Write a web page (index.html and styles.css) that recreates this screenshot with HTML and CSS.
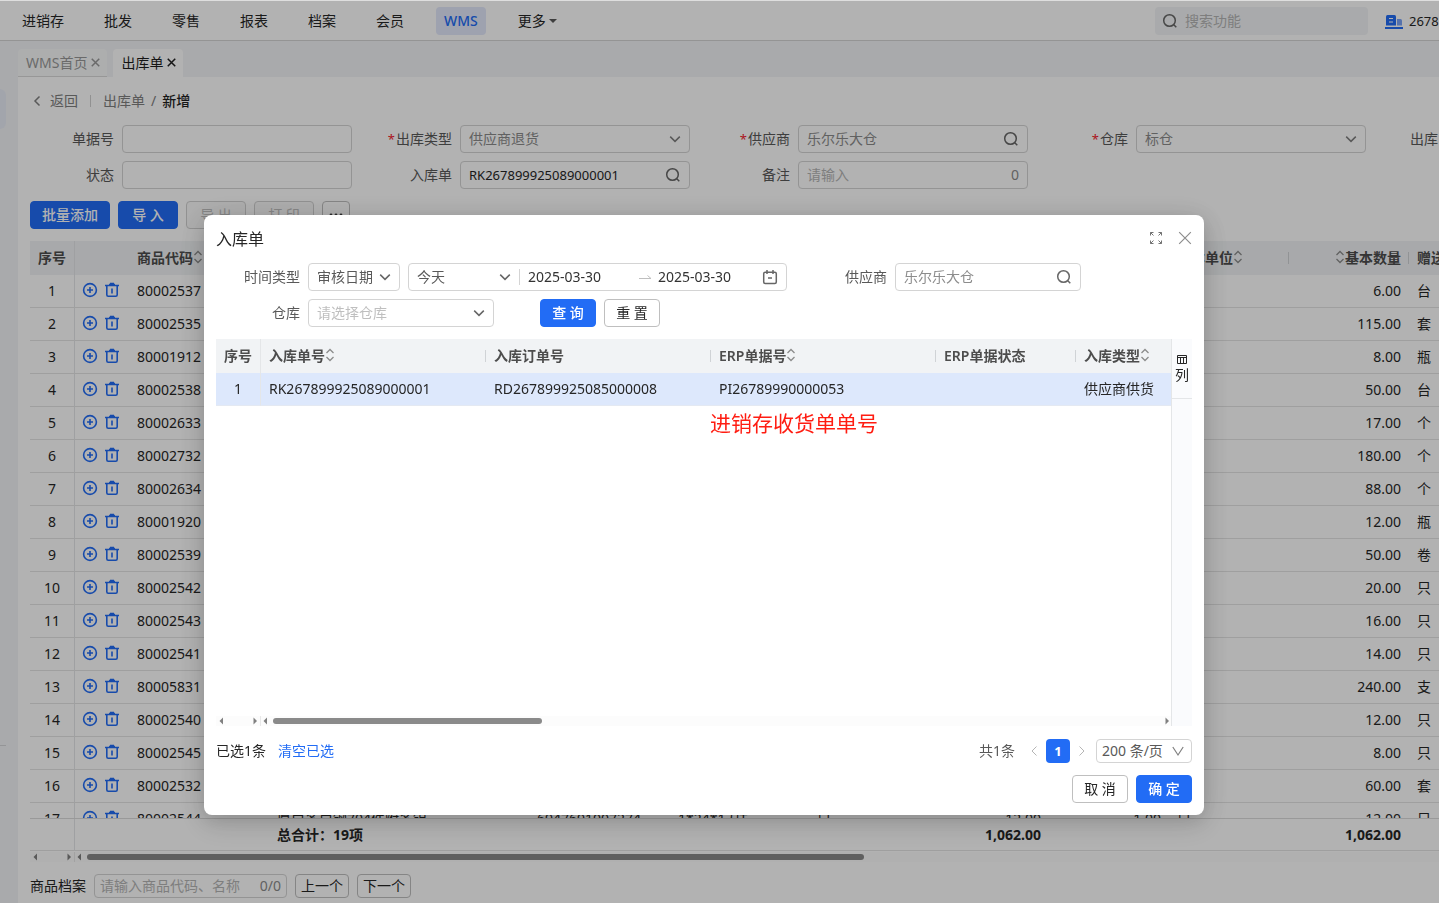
FILE: index.html
```html
<!DOCTYPE html>
<html lang="zh-CN">
<head>
<meta charset="utf-8">
<title>出库单 - 新增</title>
<link rel="stylesheet" href="styles.css">
</head>
<body>
<svg class="sprite" aria-hidden="true">
  <symbol id="search" viewBox="0 0 16 16"><circle cx="7.5" cy="7.5" r="5.8"/><path d="M11.8 11.8L14.3 14.3"/></symbol>
  <symbol id="down" viewBox="0 0 12 12"><path d="M1.2 3.6L6 8.4L10.8 3.6"/></symbol>
  <symbol id="close" viewBox="0 0 12 12"><path d="M1 1L11 11M11 1L1 11"/></symbol>
  <symbol id="sort" viewBox="0 0 10 14"><path d="M1.5 5L5 1.5L8.5 5M1.5 9L5 12.5L8.5 9"/></symbol>
  <symbol id="add" viewBox="0 0 16 16"><circle cx="8" cy="8" r="6.4"/><path d="M8 5V11M5 8H11"/></symbol>
  <symbol id="trash" viewBox="0 0 16 16"><path d="M1 3.5H15M5 2.5H11M6 1.5H10M2.8 4V12.8Q2.8 14.2 4.2 14.2H11.8Q13.2 14.2 13.2 12.8V4M8 6.5V11.5"/></symbol>
  <symbol id="left" viewBox="0 0 12 12"><path d="M8.5 1.5L4 6L8.5 10.5"/></symbol>
  <symbol id="right" viewBox="0 0 12 12"><path d="M3.5 1.5L8 6L3.5 10.5"/></symbol>
  <symbol id="tri-left" viewBox="0 0 8 8"><path d="M6 .5V7.5L2.5 4Z"/></symbol>
  <symbol id="tri-right" viewBox="0 0 8 8"><path d="M2.5 .5V7.5L6 4Z"/></symbol>
</svg>

<div class="app">
  <header class="topbar">
    <nav class="nav">
      <a href="#">进销存</a><a href="#">批发</a><a href="#">零售</a><a href="#">报表</a><a href="#">档案</a><a href="#">会员</a><a href="#" class="active">WMS</a><a href="#">更多<span class="caret"></span></a>
    </nav>
    <label class="global-search"><svg class="icon"><use href="#search"/></svg><input type="text" placeholder="搜索功能" aria-label="搜索功能"></label>
    <div class="account">
      <svg class="building" viewBox="0 0 18 16"><path d="M1 12.5V3.5Q1 2 2.5 2H9.5Q11 2 11 3.5V12.5Z" fill="#226cf5"/><path d="M12 6H15.5Q17 6 17 7.5V12.5H12Z" fill="#7ba4f7"/><path d="M4 5.5H8M4 9H8" stroke="#fff" stroke-width="1.2"/><path d="M0 15H18" stroke="#226cf5" stroke-width="2"/></svg>
      <span>2678</span>
    </div>
  </header>

  <div class="workspace">
    <aside class="rail"><span class="rail-active"></span><hr class="rail-line"></aside>
    <main class="main">
      <div class="tabs">
        <a href="#" class="tab">WMS首页<svg class="tab-x"><use href="#close"/></svg></a>
        <a href="#" class="tab current">出库单<svg class="tab-x"><use href="#close"/></svg></a>
      </div>
      <section class="page">
        <div class="crumbs">
          <a href="#" class="back"><svg class="chev"><use href="#left"/></svg>返回</a>
          <span class="crumb-bar"></span>
          <a href="#">出库单</a><span class="slash">/</span><span class="here">新增</span>
        </div>

        <form class="doc-form">
          <label class="field"><span class="label">单据号</span><span class="control"><input type="text"></span></label>
          <label class="field"><span class="label"><i>*</i>出库类型</span><span class="control muted"><select><option>供应商退货</option></select><svg class="chev"><use href="#down"/></svg></span></label>
          <label class="field"><span class="label"><i>*</i>供应商</span><span class="control muted"><input type="text" value="乐尔乐大仓"><svg class="icon"><use href="#search"/></svg></span></label>
          <label class="field"><span class="label"><i>*</i>仓库</span><span class="control muted"><select><option>标仓</option></select><svg class="chev"><use href="#down"/></svg></span></label>
          <label class="field"><span class="label">出库日期</span><span class="control"><input type="text"></span></label>
          <label class="field"><span class="label">状态</span><span class="control"><input type="text"></span></label>
          <label class="field"><span class="label">入库单</span><span class="control"><input type="text" value="RK267899925089000001"><svg class="icon"><use href="#search"/></svg></span></label>
          <label class="field"><span class="label">备注</span><span class="control"><input type="text" placeholder="请输入"><span class="count">0</span></span></label>
        </form>

        <div class="toolbar">
          <button class="btn primary wide">批量添加</button>
          <button class="btn primary">导 入</button>
          <button class="btn" disabled>导 出</button>
          <button class="btn" disabled>打 印</button>
          <button class="btn more" aria-label="更多操作"><svg class="dots" viewBox="0 0 16 4"><circle cx="3" cy="2" r="1.4"/><circle cx="8" cy="2" r="1.4"/><circle cx="13" cy="2" r="1.4"/></svg></button>
        </div>

        <div class="grid-body">
          <table class="grid items">
            <colgroup><col class="c-no"><col class="c-act"><col class="c-code"><col class="c-name"><col class="c-bar"><col class="c-spec"><col class="c-std"><col class="c-std"><col class="c-std"><col class="c-std"><col class="c-std"><col class="c-std"></colgroup>
            <thead><tr><th class="no">序号</th><th></th><th>商品代码<svg class="sort"><use href="#sort"/></svg></th><th>商品名称</th><th>条码</th><th>规格</th><th>单位</th><th class="num">数量</th><th class="num">换算率</th><th class="split">基本单位<svg class="sort"><use href="#sort"/></svg></th><th class="num split"><svg class="sort"><use href="#sort"/></svg>基本数量</th><th>赠送</th></tr></thead>
            <tbody>
              <tr><td class="no">1</td><td class="act"><svg><use href="#add"/></svg><svg><use href="#trash"/></svg></td><td>80002537</td><td colspan="7"></td><td class="num">6.00</td><td>台</td></tr>
              <tr><td class="no">2</td><td class="act"><svg><use href="#add"/></svg><svg><use href="#trash"/></svg></td><td>80002535</td><td colspan="7"></td><td class="num">115.00</td><td>套</td></tr>
              <tr><td class="no">3</td><td class="act"><svg><use href="#add"/></svg><svg><use href="#trash"/></svg></td><td>80001912</td><td colspan="7"></td><td class="num">8.00</td><td>瓶</td></tr>
              <tr><td class="no">4</td><td class="act"><svg><use href="#add"/></svg><svg><use href="#trash"/></svg></td><td>80002538</td><td colspan="7"></td><td class="num">50.00</td><td>台</td></tr>
              <tr><td class="no">5</td><td class="act"><svg><use href="#add"/></svg><svg><use href="#trash"/></svg></td><td>80002633</td><td colspan="7"></td><td class="num">17.00</td><td>个</td></tr>
              <tr><td class="no">6</td><td class="act"><svg><use href="#add"/></svg><svg><use href="#trash"/></svg></td><td>80002732</td><td colspan="7"></td><td class="num">180.00</td><td>个</td></tr>
              <tr><td class="no">7</td><td class="act"><svg><use href="#add"/></svg><svg><use href="#trash"/></svg></td><td>80002634</td><td colspan="7"></td><td class="num">88.00</td><td>个</td></tr>
              <tr><td class="no">8</td><td class="act"><svg><use href="#add"/></svg><svg><use href="#trash"/></svg></td><td>80001920</td><td colspan="7"></td><td class="num">12.00</td><td>瓶</td></tr>
              <tr><td class="no">9</td><td class="act"><svg><use href="#add"/></svg><svg><use href="#trash"/></svg></td><td>80002539</td><td colspan="7"></td><td class="num">50.00</td><td>卷</td></tr>
              <tr><td class="no">10</td><td class="act"><svg><use href="#add"/></svg><svg><use href="#trash"/></svg></td><td>80002542</td><td colspan="7"></td><td class="num">20.00</td><td>只</td></tr>
              <tr><td class="no">11</td><td class="act"><svg><use href="#add"/></svg><svg><use href="#trash"/></svg></td><td>80002543</td><td colspan="7"></td><td class="num">16.00</td><td>只</td></tr>
              <tr><td class="no">12</td><td class="act"><svg><use href="#add"/></svg><svg><use href="#trash"/></svg></td><td>80002541</td><td colspan="7"></td><td class="num">14.00</td><td>只</td></tr>
              <tr><td class="no">13</td><td class="act"><svg><use href="#add"/></svg><svg><use href="#trash"/></svg></td><td>80005831</td><td colspan="7"></td><td class="num">240.00</td><td>支</td></tr>
              <tr><td class="no">14</td><td class="act"><svg><use href="#add"/></svg><svg><use href="#trash"/></svg></td><td>80002540</td><td colspan="7"></td><td class="num">12.00</td><td>只</td></tr>
              <tr><td class="no">15</td><td class="act"><svg><use href="#add"/></svg><svg><use href="#trash"/></svg></td><td>80002545</td><td colspan="7"></td><td class="num">8.00</td><td>只</td></tr>
              <tr><td class="no">16</td><td class="act"><svg><use href="#add"/></svg><svg><use href="#trash"/></svg></td><td>80002532</td><td colspan="7"></td><td class="num">60.00</td><td>套</td></tr>
              <tr><td class="no">17</td><td class="act"><svg><use href="#add"/></svg><svg><use href="#trash"/></svg></td><td>80002544</td><td>厚白多白钢704件附多铝</td><td>6947691007274</td><td>1*24*1刀T</td><td>只</td><td class="num">12.00</td><td class="num">1.00</td><td>只</td><td class="num">12.00</td><td>只</td></tr>
            </tbody>
          </table>
        </div>
        <div class="grid-total">
          <table class="grid total">
            <colgroup><col class="c-no"><col class="c-act"><col class="c-code"><col class="c-name"><col class="c-bar"><col class="c-spec"><col class="c-std"><col class="c-std"><col class="c-std"><col class="c-std"><col class="c-std"><col class="c-std"></colgroup>
            <tbody><tr><td class="no"></td><td></td><td></td><td class="sum">总合计：19项</td><td></td><td></td><td></td><td class="num">1,062.00</td><td></td><td></td><td class="num">1,062.00</td><td></td></tr></tbody>
          </table>
        </div>
        <div class="scroll">
          <div class="scroll-pin"><svg><use href="#tri-left"/></svg><svg><use href="#tri-right"/></svg></div>
          <div class="scroll-track"><svg><use href="#tri-left"/></svg><span class="thumb thumb-page"></span></div>
        </div>

        <div class="finder">
          <label for="find">商品档案</label>
          <span class="control small"><input id="find" type="text" placeholder="请输入商品代码、名称"><span class="count">0/0</span></span>
          <button class="btn small">上一个</button>
          <button class="btn small">下一个</button>
        </div>
      </section>
    </main>
  </div>
</div>

<div class="mask">
  <div class="modal" role="dialog" aria-labelledby="dlg-title">
    <div class="modal-head">
      <h2 id="dlg-title">入库单</h2>
      <button class="plain" aria-label="全屏"><svg class="full" viewBox="0 0 14 14"><path d="M1.5 4.5V1.5H4.5M1.5 1.5L4.5 4.5M9.5 1.5H12.5V4.5M12.5 1.5L9.5 4.5M1.5 9.5V12.5H4.5M1.5 12.5L4.5 9.5M9.5 12.5H12.5V9.5M12.5 12.5L9.5 9.5"/></svg></button>
      <button class="plain" aria-label="关闭"><svg class="x"><use href="#close"/></svg></button>
    </div>
    <form class="query">
      <div class="query-row">
        <span class="label" id="time-type">时间类型</span>
        <span class="control w-type"><select aria-labelledby="time-type"><option>审核日期</option></select><svg class="chev"><use href="#down"/></svg></span>
        <span class="control range">
          <select aria-label="时间范围"><option>今天</option></select><svg class="chev"><use href="#down"/></svg>
          <span class="range-bar"></span>
          <input type="text" value="2025-03-30" aria-label="开始日期">
          <svg class="arrow" viewBox="0 0 12 8"><path d="M0 5.5H12L8.5 2.5"/></svg>
          <input type="text" value="2025-03-30" aria-label="结束日期">
          <svg class="icon" viewBox="0 0 16 16"><path d="M3.2 3.2H12.8Q14.3 3.2 14.3 4.7V13Q14.3 14.5 12.8 14.5H3.2Q1.7 14.5 1.7 13V4.7Q1.7 3.2 3.2 3.2ZM5 1V5M11 1V5M6 9H10"/></svg>
        </span>
        <label class="label supplier" for="supplier">供应商</label>
        <span class="control muted w-field"><input id="supplier" type="text" value="乐尔乐大仓"><svg class="icon"><use href="#search"/></svg></span>
      </div>
      <div class="query-row">
        <label class="label" for="store">仓库</label>
        <span class="control hint w-field"><select id="store"><option>请选择仓库</option></select><svg class="chev"><use href="#down"/></svg></span>
        <button type="button" class="btn primary mid ask">查 询</button>
        <button type="button" class="btn mid">重 置</button>
      </div>
    </form>

    <div class="result">
      <div class="result-main">
        <table class="grid orders">
          <colgroup><col class="c-no"><col class="c-wide"><col class="c-wide"><col class="c-wide"><col class="c-state"><col></colgroup>
          <thead><tr><th class="no">序号</th><th class="split">入库单号<svg class="sort"><use href="#sort"/></svg></th><th class="split">入库订单号</th><th class="split">ERP单据号<svg class="sort"><use href="#sort"/></svg></th><th class="split">ERP单据状态</th><th>入库类型<svg class="sort"><use href="#sort"/></svg></th></tr></thead>
          <tbody><tr class="picked"><td class="no">1</td><td>RK267899925089000001</td><td>RD267899925085000008</td><td>PI26789990000053</td><td></td><td>供应商供货</td></tr></tbody>
        </table>
        <p class="remark">进销存收货单单号</p>
        <div class="scroll">
          <div class="scroll-pin"><svg><use href="#tri-left"/></svg><svg><use href="#tri-right"/></svg></div>
          <div class="scroll-track"><svg><use href="#tri-left"/></svg><span class="thumb thumb-modal"></span><svg class="end"><use href="#tri-right"/></svg></div>
        </div>
      </div>
      <div class="side"><button class="col-btn"><svg viewBox="0 0 12 12"><path d="M1.5 2.5H10.5V10.5H1.5ZM1.5 4.5H10.5M4.5 4.5V10.5M7.5 4.5V10.5"/></svg>列</button></div>
    </div>

    <div class="pager">
      <span>已选1条</span><a href="#" class="clear">清空已选</a>
      <span class="all">共1条</span>
      <button class="plain page-step" aria-label="上一页"><svg class="chev"><use href="#left"/></svg></button>
      <button class="page-no">1</button>
      <button class="plain page-step" aria-label="下一页"><svg class="chev"><use href="#right"/></svg></button>
      <span class="control small size"><select aria-label="每页条数"><option>200 条/页</option></select><svg class="chev" viewBox="0 0 12 12"><path d="M.8 2L6 10L11.2 2"/></svg></span>
    </div>
    <div class="modal-foot">
      <button class="btn mid">取 消</button>
      <button class="btn primary mid">确 定</button>
    </div>
  </div>
</div>
</body>
</html>
```

FILE: styles.css
```css
* { box-sizing: border-box; }
html, body { height: 100%; margin: 0; }
body {
  overflow: hidden;
  font: 14px/20px "Noto Sans", "Noto Sans CJK SC", sans-serif;
  color: #262626;
  background: #fff;
}
a { color: inherit; text-decoration: none; }
button, input, select { font: inherit; color: inherit; margin: 0; padding: 0; }
svg { display: block; flex: none; fill: none; stroke: currentColor; }
.sprite { position: absolute; width: 0; height: 0; }

.app { height: 100vh; display: flex; flex-direction: column; overflow: hidden; }

/* top bar */
.topbar {
  height: 41px;
  flex: none;
  display: flex;
  align-items: center;
  padding-left: 14px;
  border-bottom: 1px solid #d4d4d4;
  border-top: 1px solid #dedede;
}
.nav { flex: 1; display: flex; gap: 24px; white-space: nowrap; }
.nav a { display: flex; align-items: center; height: 28px; padding: 0 8px; border-radius: 4px; }
.nav .active { background: #e3e8fb; color: #226cf5; font-weight: 500; }
.caret { border: 4px solid transparent; border-top-color: #595959; border-bottom: 0; margin-left: 3px; }
.global-search {
  width: 213px; height: 28px; flex: none;
  display: flex; align-items: center; gap: 7px;
  padding: 0 7px; border-radius: 4px; background: #f2f4f6; color: #666;
}
.global-search input { flex: 1; min-width: 0; border: 0; outline: 0; background: none; }
.account { width: 71px; flex: none; display: flex; align-items: center; gap: 6px; padding-left: 17px; overflow: hidden; font-size: 13px; }
.building { width: 18px; height: 16px; stroke: none; }
::placeholder { color: #b5b5b5; opacity: 1; }

/* workspace */
.workspace { flex: 1; min-height: 0; display: flex; background: #f2f4f6; }
.rail { width: 18px; flex: none; padding-top: 48px; display: flex; flex-direction: column; justify-content: space-between; padding-bottom: 157px; }
.rail-active { width: 6px; height: 40px; border-radius: 0 6px 6px 0; background: #e9edf7; }
.rail-line { width: 6px; margin: 0; border: 0; border-top: 1px solid #d4d6d8; }
.main { flex: 1; min-width: 0; display: flex; flex-direction: column; }
.tabs { display: flex; gap: 6px; padding-top: 8px; flex: none; }
.tab {
  height: 28px; display: flex; align-items: center; gap: 4px; padding: 0 7px 0 8px;
  color: #999; background: #f8f9fa; border-bottom: 1px solid #d9d9d9; border-radius: 4px 4px 0 0;
}
.tab.current { background: #fff; border-color: #fff; color: #1f1f1f; }
.tab-x { width: 9px; height: 9px; stroke-width: 2; }

.page { flex: 1; min-height: 0; display: flex; flex-direction: column; padding: 12px 0 5px 12px; background: #fff; overflow: hidden; }
.crumbs { display: flex; align-items: center; height: 24px; color: #808080; }
.back { display: flex; align-items: center; gap: 7px; padding-left: 1px; }
.crumb-bar { width: 1px; height: 12px; background: #d0d0d0; margin: 0 12px; }
.slash { margin: 0 6px; }
.here { color: #1f1f1f; font-weight: 500; }

.icon { width: 16px; height: 16px; color: #666; stroke-width: 1.5; }
.chev { width: 12px; height: 12px; color: #808080; stroke-width: 1.5; }

.control {
  flex: 1; min-width: 0; height: 28px;
  display: flex; align-items: center; gap: 4px;
  padding: 0 8px; border: 1px solid #d4d4d4; border-radius: 4px; background: #fff;
}
.control input, .control select {
  flex: 1; min-width: 0; width: 0; height: 20px; line-height: 20px;
  border: 0; outline: 0; background: none; appearance: none;
}
.control input { font-size: 13px; }
.control.muted select, .control.muted input { color: #8c8c8c; font-size: 14px; }
.control input::placeholder { font-size: 14px; }
.control.hint select { color: #bfbfbf; }
.count { color: #8c8c8c; }

.doc-form { display: grid; grid-template-columns: repeat(5, 322px); gap: 8px 16px; margin-top: 12px; flex: none; }
.field { display: flex; align-items: center; gap: 8px; }
.label { width: 84px; flex: none; text-align: right; color: #595959; white-space: nowrap; }
.label i { color: #f5222d; font-style: normal; font-size: 13px; margin-right: 1px; }

.toolbar { display: flex; gap: 8px; margin: 12px 0; flex: none; }
.btn {
  width: 60px; height: 28px; flex: none;
  border: 1px solid #bfbfbf; border-radius: 4px; background: #fff; color: #262626;
  white-space: nowrap; line-height: 20px;
}
.btn.primary { background: #226cf5; border-color: #226cf5; color: #fff; font-weight: 500; }
.btn.wide { width: 80px; }
.btn.mid { width: 56px; }
.btn.more { width: 28px; display: flex; align-items: center; justify-content: center; }
.btn.small { width: 54px; height: 24px; }
.btn:disabled { border-color: #d0d0d0; background: #fafafa; color: #bfbfbf; }
.dots { width: 16px; height: 4px; fill: #404040; stroke: none; }

/* tables */
.grid { border-collapse: separate; border-spacing: 0; table-layout: fixed; }
.items, .total { width: 1499px; }
.c-no { width: 45px; } .c-act { width: 54px; } .c-code { width: 140px; } .c-name { width: 260px; }
.c-bar { width: 141px; } .c-spec { width: 139px; } .c-std { width: 120px; }
.c-wide { width: 225px; } .c-state { width: 140px; }
.grid th, .grid td { padding: 0 8px; text-align: left; white-space: nowrap; overflow: hidden; }
.grid th { height: 34px; background: #f1f3f5; color: #4d4d4d; font-weight: 600; }
.grid td { height: 33px; border-bottom: 1px solid #e4e4e4; }
.grid .no { text-align: center; padding: 0; border-right: 1px solid #e4e6e8; }
.grid .num { text-align: right; }
.grid .split { background: linear-gradient(#d0d3d6, #d0d3d6) right center / 1px 12px no-repeat #f1f3f5; }
.sort { display: inline-block; width: 10px; height: 14px; vertical-align: -1px; color: #8c8c8c; stroke-width: 1.3; }
.act svg { display: inline-block; width: 16px; height: 16px; vertical-align: -2px; color: #226cf5; stroke-width: 1.6; }
.act svg + svg { margin-left: 6px; }
.grid .act { padding: 0 0 0 7px; }

.grid-body { flex: 1; min-height: 0; overflow: hidden; }
.grid-total { flex: none; overflow: hidden; border-top: 1px solid #dcdcdc; }
.total td { height: 32px; font-weight: 700; }

.scroll { display: flex; height: 10px; flex: none; color: #808080; }
.grid-total + .scroll { margin-top: 1px; }
.scroll svg { width: 8px; height: 8px; fill: currentColor; stroke: none; }
.scroll-pin { width: 45px; display: flex; align-items: center; justify-content: space-between; padding: 0 1px; border-right: 1px solid #e8e8e8; background: #fcfcfc; }
.scroll-track { flex: 1; display: flex; align-items: center; gap: 4px; background: #fcfcfc; }
.thumb { height: 6px; border-radius: 3px; background: #8a8a8a; }
.thumb-page { width: 57%; }
.thumb-modal { width: 269px; }
.scroll .end { margin-left: auto; }

.finder { display: flex; align-items: center; gap: 8px; margin-top: 12px; flex: none; }
.control.small { height: 24px; padding: 0 5px; }
.finder .control { flex: none; width: 193px; }

/* dialog */
.mask { position: fixed; inset: 1px 0 0; padding: 214px 0 0 204px; background: rgba(0, 0, 0, .3); }
.modal {
  width: 1000px; height: 600px; display: flex; flex-direction: column;
  padding: 12px; border-radius: 8px; background: #fff;
  box-shadow: 0 6px 16px rgba(0, 0, 0, .08), 0 9px 28px 8px rgba(0, 0, 0, .06), 0 3px 30px rgba(0, 0, 0, .12);
}
.modal-head { display: flex; align-items: center; gap: 15px; height: 24px; margin-bottom: 12px; }
.modal-head h2 { flex: 1; margin: 0; font-size: 16px; line-height: 24px; font-weight: 400; }
.plain { border: 0; background: none; display: flex; align-items: center; justify-content: center; }
.modal-head .plain { height: 22px; align-self: flex-start; }
.full { width: 14px; height: 14px; color: #737373; }
.x { width: 14px; height: 14px; color: #8c8c8c; }
.query { display: flex; flex-direction: column; gap: 8px; margin-bottom: 12px; }
.query-row { display: flex; align-items: center; gap: 8px; }
.query .control { flex: none; color: #595959; }
.query .range { color: #333; width: 379px; gap: 0; }
.query .range select { flex: 0 0 82px; color: #595959; }
.query .range input { font-size: 14px; }
.query .range .icon { margin-left: -7px; }
.query .chev { color: #666; }
.range-bar { width: 1px; height: 16px; background: #d4d4d4; margin: 0 8px; }
.arrow { width: 12px; height: 8px; color: #bfbfbf; margin-right: 7px; }
.w-type { width: 92px; }
.w-field { width: 186px; }
.query .supplier { width: 92px; }
.ask { margin-left: 38px; }

.result { flex: 1; min-height: 0; display: flex; }
.result-main { flex: 1; min-width: 0; display: flex; flex-direction: column; justify-content: space-between; position: relative; }
.orders { width: 100%; }
.picked td { background: #dde8fc; border-bottom-color: #e4e9f2; }
.remark { position: absolute; left: 494px; top: 69px; margin: 0; font-size: 21px; line-height: 30px; color: #ff1d12; }
.side { width: 21px; border-left: 1px solid #e4e6e8; background: #fafbfd; }
.col-btn { width: 100%; height: 60px; padding: 0; border: 0; border-bottom: 1px solid #e4e6e8; background: none; display: flex; flex-direction: column; align-items: center; justify-content: center; }
.col-btn svg { width: 12px; height: 12px; }

.pager { display: flex; align-items: center; height: 24px; margin: 13px 0 12px; }
.clear { color: #226cf5; margin-left: 12px; }
.all { margin-left: auto; margin-right: 12px; color: #595959; }
.page-step { width: 14px; height: 24px; color: #bfbfbf; }
.page-step .chev { color: #b5b5b5; stroke-width: 1; }
.page-no { width: 24px; height: 24px; margin: 0 5px; border: 0; border-radius: 4px; background: #226cf5; color: #fff; font-size: 13px; font-weight: 700; }
.control.size { flex: none; width: 96px; color: #595959; margin-left: 7px; gap: 0; padding-right: 7px; }
.size .chev { stroke-width: 1.2; }
.modal-foot { display: flex; justify-content: flex-end; gap: 8px; }
```
